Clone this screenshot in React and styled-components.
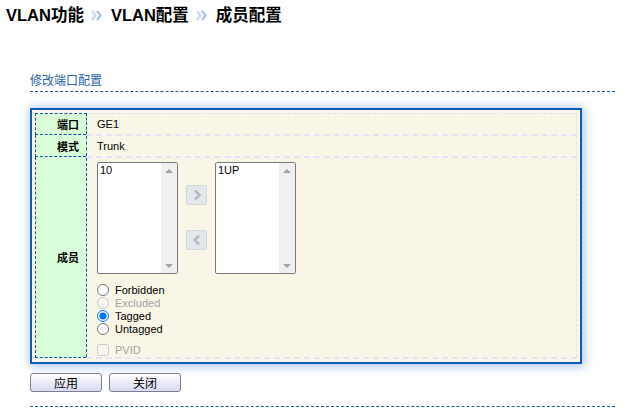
import styled, { createGlobalStyle } from "styled-components";

const GlobalStyle = createGlobalStyle`
  body {
    margin: 0;
    background: #fff;
    color: #000;
    font-family: "Liberation Sans", Arial, "Noto Sans CJK SC", sans-serif;
    font-size: 11px;
  }
`;

const Crumbs = styled.h1`
  margin: 0;
  padding: 5px 0 0 6px;
  height: 20px;
  display: flex;
  align-items: center;
  font-size: 16.5px;
  font-weight: bold;
  line-height: 20px;
`;

const Sep = styled.svg`
  width: 11px;
  height: 11px;
  margin: 0 9px 0 7px;
`;

const Content = styled.div`
  width: 585px;
  padding-left: 30px;
`;

const SectionTitle = styled.div`
  margin-top: 48px;
  padding-bottom: 2px;
  line-height: 16px;
  font-size: 12px;
  color: #2a62ad;
  border-bottom: 1px dashed #1459aa;
`;

const Panel = styled.div`
  box-sizing: border-box;
  width: 552px;
  margin-top: 16px;
  padding: 3px;
  background: #f9f6e7;
  border: 2px solid #0b5cbc;
  box-shadow: 1px 1px 9px 2px rgba(40, 110, 200, 0.35);
`;

const Table = styled.table`
  width: 100%;
  border-collapse: collapse;
  border: 1px dashed #e2dff0;
`;

const Label = styled.th`
  box-sizing: border-box;
  width: 51px;
  padding: 0 7px 0 0;
  text-align: right;
  font-weight: bold;
  background: #d9fcd9;
  border: 1px dashed #0b55a8;
  vertical-align: middle;
`;

const Value = styled.td`
  box-sizing: border-box;
  height: ${(p) => p.$h || "auto"};
  padding: ${(p) => (p.$top ? "4px 10px 0" : "0 10px")};
  border-bottom: 2px dashed #e4e2f4;
  vertical-align: ${(p) => (p.$top ? "top" : "middle")};
`;

const ListRow = styled.div`
  display: flex;
  align-items: center;
  gap: 8px;
`;

const ListBox = styled.div`
  box-sizing: border-box;
  width: 81px;
  height: 112px;
  display: flex;
  background: #fff;
  border: 1px solid #7a7a7a;
  border-radius: 2px;
`;

const Items = styled.div`
  flex: 1;
  padding: 1px 2px;
  line-height: 13px;
`;

const ScrollBar = styled.div`
  width: 16px;
  display: flex;
  flex-direction: column;
  justify-content: space-between;
  align-items: center;
  padding: 6px 0 5px;
  background: #f0f0f0;
`;

const Tri = styled.span`
  width: 0;
  height: 0;
  border-left: 4px solid transparent;
  border-right: 4px solid transparent;
  ${(p) =>
    p.$down
      ? "border-top: 4px solid #a3a3a3;"
      : "border-bottom: 4px solid #a3a3a3;"}
`;

const MoveCol = styled.div`
  display: flex;
  flex-direction: column;
  gap: 25px;
`;

const MoveBtn = styled.button`
  box-sizing: border-box;
  width: 21px;
  height: 20px;
  padding: 0;
  display: flex;
  align-items: center;
  justify-content: center;
  background: #e4e8ec;
  border: 1px solid #d2d6db;
  border-radius: 2px;
`;

const Options = styled.div`
  margin-top: 10px;
  display: flex;
  flex-direction: column;
`;

const Option = styled.label`
  height: ${(p) => p.$h || "13px"};
  margin-top: ${(p) => p.$gap || "0"};
  display: flex;
  align-items: center;
  color: ${(p) => (p.$off ? "#a2a2a2" : "#000")};
  input {
    width: 12px;
    height: 12px;
    margin: 0 6px 0 0;
  }
`;

const Actions = styled.div`
  margin-top: 9px;
  display: flex;
  gap: 7px;
`;

const Button = styled.button`
  width: 72px;
  height: 19px;
  padding: 0;
  font-family: inherit;
  font-size: 12px;
  color: #000;
  background: linear-gradient(#ffffff, #d9d9f2);
  border: 1px solid #7b8090;
  border-radius: 3px;
`;

const Rule = styled.div`
  margin-top: 14px;
  border-top: 1px dashed #1459aa;
`;

const Chevrons = () => (
  <Sep viewBox="0 0 11 11">
    <polyline points="1,1 4.5,5.5 1,10" fill="none" stroke="#c9d9ef" strokeWidth="2.2" />
    <polyline points="6,1 9.5,5.5 6,10" fill="none" stroke="#a9c3e6" strokeWidth="2.2" />
  </Sep>
);

const Arrow = ({ left }) => (
  <svg width="10" height="12" viewBox="0 0 10 12">
    <polyline
      points={left ? "7,1.5 2.5,6 7,10.5" : "3,1.5 7.5,6 3,10.5"}
      fill="none"
      stroke="#b4bcc5"
      strokeWidth="2.6"
    />
  </svg>
);

const List = ({ items }) => (
  <ListBox>
    <Items>
      {items.map((it) => (
        <div key={it}>{it}</div>
      ))}
    </Items>
    <ScrollBar>
      <Tri />
      <Tri $down />
    </ScrollBar>
  </ListBox>
);

export default function App() {
  return (
    <>
      <GlobalStyle />
      <Crumbs>
        VLAN功能
        <Chevrons />
        VLAN配置
        <Chevrons />
        成员配置
      </Crumbs>
      <Content>
        <SectionTitle>修改端口配置</SectionTitle>
        <Panel>
          <Table>
            <tbody>
              <tr>
                <Label>端口</Label>
                <Value $h="21px">GE1</Value>
              </tr>
              <tr>
                <Label>模式</Label>
                <Value $h="22px">Trunk</Value>
              </tr>
              <tr>
                <Label>成员</Label>
                <Value $top>
                  <ListRow>
                    <List items={["10"]} />
                    <MoveCol>
                      <MoveBtn>
                        <Arrow />
                      </MoveBtn>
                      <MoveBtn>
                        <Arrow left />
                      </MoveBtn>
                    </MoveCol>
                    <List items={["1UP"]} />
                  </ListRow>
                  <Options>
                    <Option>
                      <input type="radio" name="m" />
                      Forbidden
                    </Option>
                    <Option $off>
                      <input type="radio" name="m" disabled />
                      Excluded
                    </Option>
                    <Option>
                      <input type="radio" name="m" defaultChecked />
                      Tagged
                    </Option>
                    <Option>
                      <input type="radio" name="m" />
                      Untagged
                    </Option>
                    <Option $off $h="14px" $gap="7px">
                      <input type="checkbox" disabled />
                      PVID
                    </Option>
                  </Options>
                </Value>
              </tr>
            </tbody>
          </Table>
        </Panel>
        <Actions>
          <Button>应用</Button>
          <Button>关闭</Button>
        </Actions>
        <Rule />
      </Content>
    </>
  );
}
